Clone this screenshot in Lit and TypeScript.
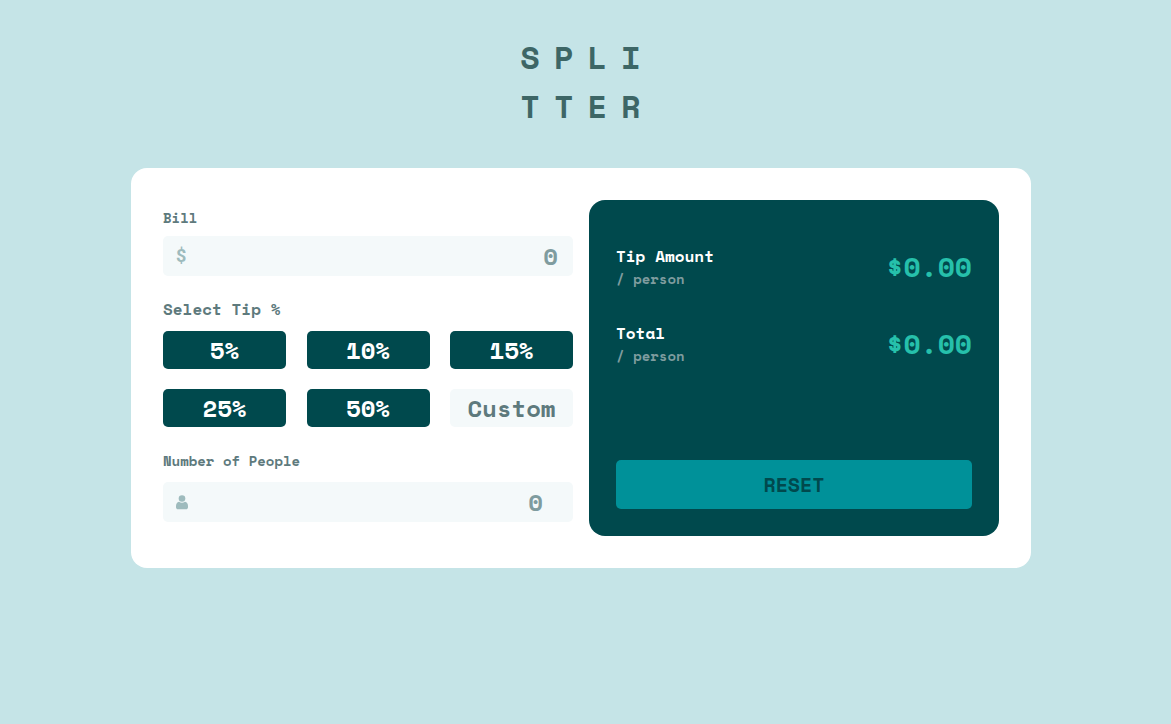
import { LitElement, css, html } from "lit";
import { customElement, state } from "lit/decorators.js";

const TIPS = [5, 10, 15, 25, 50];

@customElement("app-root")
export class AppRoot extends LitElement {
  @state() private bill = "";
  @state() private people = "";
  @state() private custom = "";
  @state() private tip = 0;

  static styles = css`
    :host {
      display: block;
      min-height: 100vh;
      box-sizing: border-box;
      padding: 33px 0 32px;
      background: #c5e4e7;
      color: #5e7a7d;
      font-family: "Space Mono", "Liberation Mono", monospace;
      font-weight: 700;
    }
    * {
      box-sizing: border-box;
    }
    h1 {
      margin: 0 0 37px;
      padding-left: 4px;
      text-align: center;
      font-size: 32px;
      line-height: 49px;
      letter-spacing: 14px;
      color: #3d6666;
    }
    main {
      padding: 0 9px 0 0;
    }
    .card {
      display: grid;
      grid-template-columns: repeat(auto-fit, minmax(300px, 1fr));
      gap: 16px;
      max-width: 900px;
      margin: 0 auto;
      padding: 32px;
      border-radius: 16px;
      background: #fff;
    }
    .form {
      display: flex;
      flex-direction: column;
      padding: 8px 0 14px;
    }
    label,
    legend {
      display: block;
      padding: 0;
      font-size: 14px;
      line-height: 20px;
    }
    legend {
      margin-bottom: 12px;
      font-size: 16px;
    }
    fieldset {
      min-width: 0;
      margin: 23px 0 24px;
      padding: 0;
      border: 0;
    }
    .field {
      display: flex;
      align-items: center;
      height: 40px;
      margin-top: 8px;
      padding: 0 15px 0 13px;
      border-radius: 5px;
      background: #f4f9fa;
      color: #9ebbbd;
    }
    .people {
      margin-top: 11px;
      padding-right: 30px;
    }
    .symbol {
      font-family: Roboto, "Liberation Sans", sans-serif;
      font-size: 18px;
      font-weight: 700;
      line-height: 24px;
    }
    .field input {
      flex: 1;
      min-width: 0;
      text-align: right;
    }
    input {
      width: 100%;
      padding: 0;
      border: 0;
      border-radius: 5px;
      background: #f4f9fa;
      color: #00494d;
      font: inherit;
      font-size: 24px;
      line-height: 36px;
    }
    input::placeholder {
      color: #7f9c9f;
      opacity: 1;
    }
    .tips {
      display: grid;
      grid-template-columns: repeat(3, 30%);
      justify-content: space-between;
      row-gap: 20px;
    }
    .custom {
      height: 38px;
      text-align: center;
    }
    .custom::placeholder {
      color: #5e7a7d;
    }
    button {
      padding: 0;
      border: 0;
      border-radius: 5px;
      font: inherit;
      cursor: pointer;
    }
    .tip {
      height: 38px;
      background: #00494d;
      color: #fff;
      font-size: 24px;
      line-height: 38px;
    }
    .tip.active {
      background: #26c0ab;
      color: #00494d;
    }
    .results {
      display: flex;
      flex-direction: column;
      gap: 32px;
      padding: 45px 27px 27px;
      border-radius: 16px;
      background: #00494d;
    }
    .row {
      display: flex;
      align-items: flex-start;
      justify-content: space-between;
    }
    .name,
    .unit {
      margin: 0;
      color: #fff;
      font-size: 16px;
      line-height: 22px;
    }
    .unit {
      margin-top: 1px;
      color: #7f9c9f;
      font-size: 14px;
    }
    output {
      color: #26c0ab;
      font-size: 28px;
      line-height: 43px;
    }
    .reset {
      height: 49px;
      margin-top: auto;
      background: #009199;
      color: #00494d;
      font-size: 20px;
    }
  `;

  private value(e: Event) {
    return (e.target as HTMLInputElement).value;
  }

  private reset() {
    this.bill = this.people = this.custom = "";
    this.tip = 0;
  }

  private row(name: string, amount: number) {
    return html`<div class="row">
      <div>
        <p class="name">${name}</p>
        <p class="unit">/ person</p>
      </div>
      <output aria-label=${name}>$${amount.toFixed(2)}</output>
    </div>`;
  }

  render() {
    const bill = Number(this.bill) || 0;
    const people = Number(this.people) || 0;
    const rate = (Number(this.custom) || this.tip) / 100;
    const tip = people > 0 ? (bill * rate) / people : 0;
    const total = people > 0 ? bill / people + tip : 0;

    return html`
      <h1>SPLI<br />TTER</h1>
      <main>
        <div class="card">
          <form class="form" @submit=${(e: Event) => e.preventDefault()}>
            <label for="bill">Bill</label>
            <div class="field">
              <span class="symbol" aria-hidden="true">$</span>
              <input id="bill" inputmode="decimal" placeholder="0" .value=${this.bill}
                @input=${(e: Event) => (this.bill = this.value(e))} />
            </div>
            <fieldset>
              <legend>Select Tip %</legend>
              <div class="tips">
                ${TIPS.map(
                  (t) => html`<button type="button" class="tip ${this.tip === t ? "active" : ""}"
                    @click=${() => { this.tip = t; this.custom = ""; }}>${t}%</button>`
                )}
                <input class="custom" aria-label="Custom tip" inputmode="decimal" placeholder="Custom"
                  .value=${this.custom} @input=${(e: Event) => (this.custom = this.value(e))} />
              </div>
            </fieldset>
            <label for="people">Number of People</label>
            <div class="field people">
              <svg width="12" height="15" viewBox="0 0 12 15" fill="currentColor" aria-hidden="true">
                <circle cx="6" cy="3.5" r="3.3" />
                <path d="M3 6.8C4.800 8.200 7.200 8.200 9 6.800C11 7.200 12 8.900 12 11V12.300C12 13.600 11.200 14.200 10 14.200H2C.8 14.200 0 13.600 0 12.300V11C0 8.900 1 7.200 3 6.800Z" />
              </svg>
              <input id="people" inputmode="numeric" placeholder="0" .value=${this.people}
                @input=${(e: Event) => (this.people = this.value(e))} />
            </div>
          </form>
          <section class="results">
            ${this.row("Tip Amount", tip)} ${this.row("Total", total)}
            <button type="button" class="reset" @click=${this.reset}>RESET</button>
          </section>
        </div>
      </main>
    `;
  }
}
